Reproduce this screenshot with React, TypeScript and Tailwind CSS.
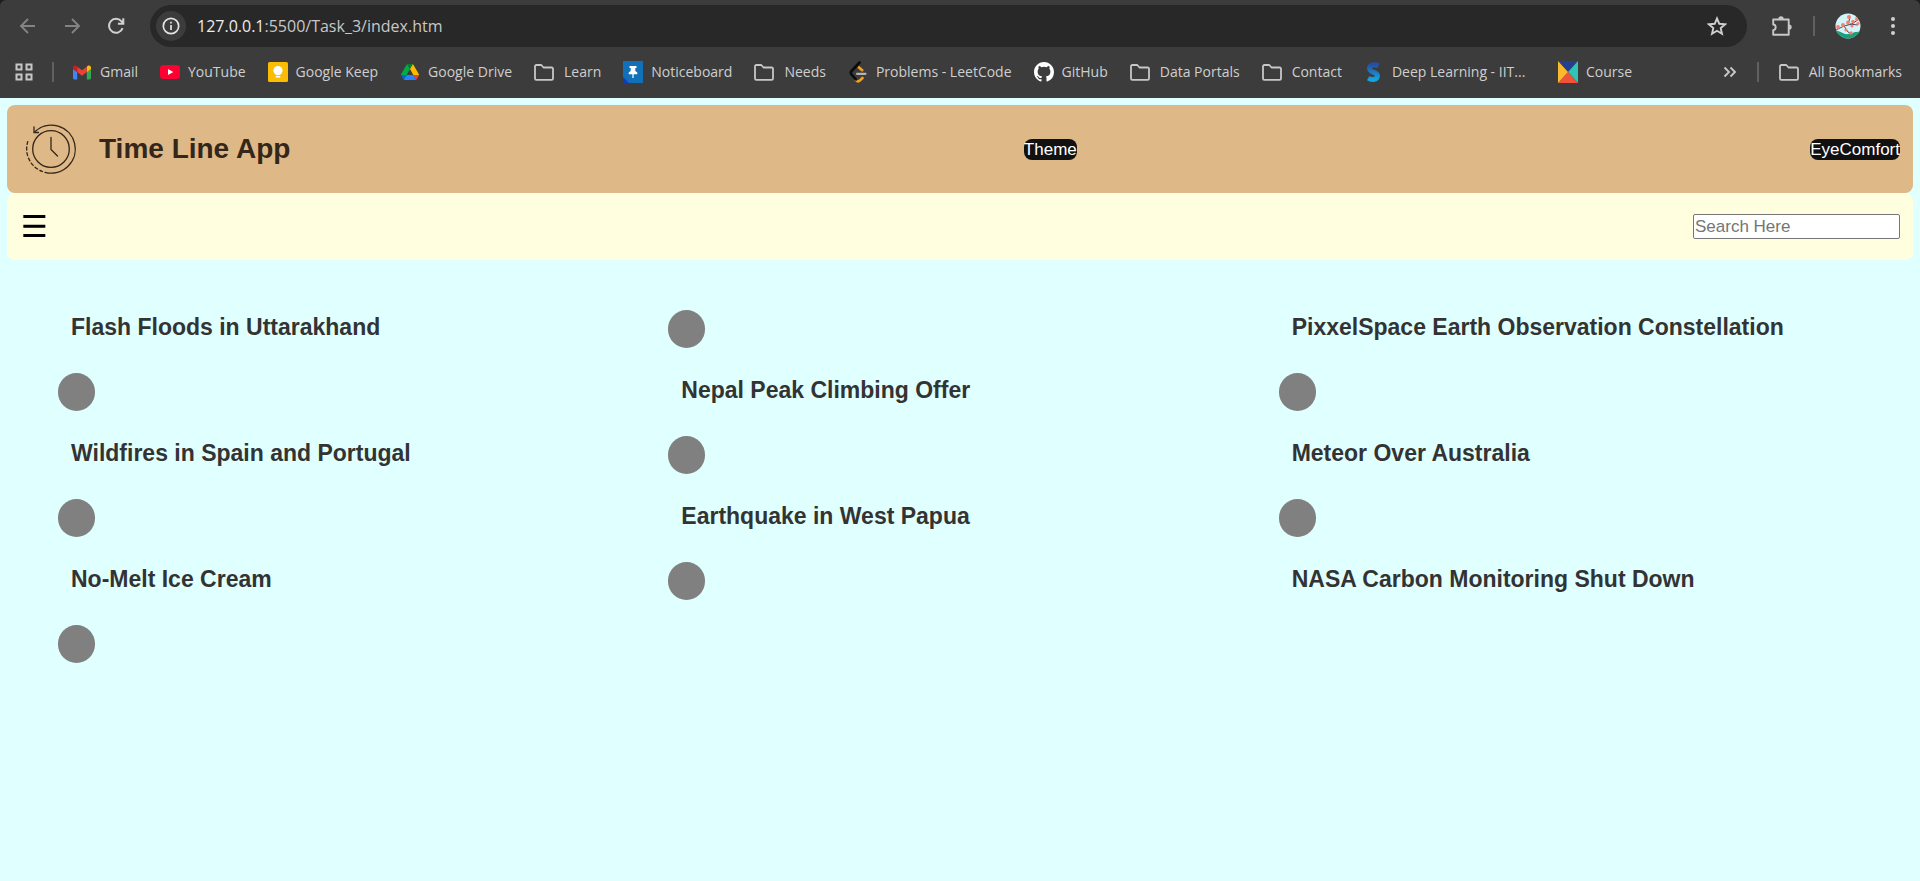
import type { ReactNode } from "react";

function FolderIcon() {
  return (
    <svg viewBox="0 0 20 20" className="size-5" fill="none" stroke="#c7c7c7" strokeWidth="1.8" strokeLinejoin="round">
      <path d="M1 16.500V4.300A1.300 1.300 0 0 1 2.300 3h5l2.200 2.500h8.200A1.300 1.300 0 0 1 19 6.800v9.700a1.300 1.300 0 0 1-1.300 1.300H2.300A1.300 1.300 0 0 1 1 16.500Z" />
    </svg>
  );
}

function GmailIcon() {
  return (
    <svg viewBox="0 0 20 20" className="size-5">
      <path fill="#4285f4" d="M1 7v9.200c0 .7.6 1.200 1.300 1.200h2.900V9.800z" />
      <path fill="#34a853" d="M14.800 17.400h2.900c.7 0 1.300-.6 1.300-1.200V7l-4.200 3.100z" />
      <path fill="#fbbc04" d="M14.800 4.800v5.400L19 7.100V5.400c0-1.700-1.900-2.600-3.200-1.600z" />
      <path fill="#ea4335" d="M5.200 10V4.700L10 8.300l4.800-3.600V10L10 13.700z" />
      <path fill="#c5221f" d="M1 5.400v1.800l4.200 3V4.700l-1-.9C2.900 2.800 1 3.700 1 5.400z" />
    </svg>
  );
}

function YouTubeIcon() {
  return (
    <svg viewBox="0 0 20 20" className="size-5">
      <rect x="0" y="3" width="20" height="14" rx="3.500" fill="#ff0033" />
      <path d="M8 7l5.300 3L8 13z" fill="#fff" />
    </svg>
  );
}

function KeepIcon() {
  return (
    <svg viewBox="0 0 20 20" className="size-5">
      <rect width="20" height="20" rx="1.500" fill="#fbbc04" />
      <circle cx="10" cy="8.600" r="4.600" fill="#fff" />
      <path d="M7.700 11h4.600v2H7.700zM7.700 14h4.600v1.500H7.700z" fill="#fff" />
    </svg>
  );
}

function DriveIcon() {
  return (
    <svg viewBox="0 0 87.300 78" className="size-[18px]">
      <path fill="#0066da" d="m6.600 66.850 3.850 6.650c.8 1.400 1.950 2.500 3.300 3.300l13.750-23.800H0c0 1.550.4 3.100 1.200 4.500z" />
      <path fill="#00ac47" d="M43.650 25 29.900 1.200c-1.350.8-2.500 1.900-3.300 3.300L1.200 48.500A9.060 9.060 0 0 0 0 53h27.500z" />
      <path fill="#ea4335" d="M73.550 76.800c1.350-.8 2.500-1.900 3.300-3.300l1.600-2.750L86.100 57.500c.8-1.400 1.200-2.950 1.200-4.500H59.800l5.850 11.500z" />
      <path fill="#00832d" d="M43.650 25 57.400 1.200C56.050.4 54.500 0 52.900 0H34.400c-1.600 0-3.150.45-4.500 1.200z" />
      <path fill="#2684fc" d="M59.800 53H27.500L13.750 76.800c1.350.8 2.900 1.200 4.500 1.200h50.800c1.600 0 3.150-.45 4.500-1.200z" />
      <path fill="#ffba00" d="M73.400 26.500 60.700 4.500c-.8-1.400-1.950-2.500-3.300-3.300L43.650 25 59.800 53h27.450c0-1.550-.4-3.100-1.200-4.500z" />
    </svg>
  );
}

function PinIcon() {
  return (
    <svg viewBox="0 0 20 22" className="h-[22px] w-5">
      <path fill="#1170b8" d="M0 0h20v22H0z" />
      <path fill="#1539c4" d="M0 16l6 6H0z" />
      <path fill="#fff" d="M6.500 5h7v2h-1.200v3l2 1.500v1.700h-3.700V17h-1.200v-3.800H5.700v-1.700l2-1.500V7H6.500z" />
    </svg>
  );
}

function LeetCodeIcon() {
  return (
    <svg viewBox="0 0 18 22" className="h-[22px] w-[18px]" fill="none" strokeLinecap="round" strokeWidth="2.600">
      <path stroke="#f9a01b" d="M10 6.500l3.200 2.700M13.500 17l-2.200 2.200c-1.300 1.300-3.200 1.200-4.400 0" />
      <path stroke="#0b0b0b" d="M10.500 1.500L2.600 10c-1 1.100-1 2.500 0 3.600L7 18.500" />
      <path stroke="#b3b3b3" strokeWidth="2.200" d="M8 12.800h8.500" />
    </svg>
  );
}

function GitHubIcon() {
  return (
    <svg viewBox="0 0 16 16" className="size-5" fill="#fff">
      <path d="M8 0C3.580 0 0 3.580 0 8c0 3.540 2.290 6.530 5.470 7.590.4.070.55-.17.55-.38 0-.19-.01-.82-.01-1.490-2.010.37-2.530-.49-2.690-.94-.09-.23-.48-.94-.82-1.130-.28-.15-.68-.52-.01-.53.63-.01 1.080.58 1.230.82.72 1.210 1.870.87 2.330.66.070-.52.28-.87.51-1.070-1.780-.2-3.640-.89-3.640-3.950 0-.87.31-1.590.82-2.150-.08-.2-.36-1.020.08-2.120 0 0 .67-.21 2.200.82a7.600 7.600 0 0 1 4 0c1.530-1.040 2.200-.82 2.200-.82.44 1.100.16 1.920.08 2.120.51.56.82 1.270.82 2.150 0 3.070-1.870 3.750-3.650 3.950.29.25.54.73.54 1.480 0 1.070-.01 1.930-.01 2.200 0 .21.15.46.55.38A8 8 0 0 0 16 8c0-4.420-3.580-8-8-8z" />
    </svg>
  );
}

function SwayamIcon() {
  return (
    <svg viewBox="0 0 18 22" className="h-[22px] w-[18px]" fill="none">
      <defs>
        <linearGradient id="wave" x1="0" y1="0" x2="0" y2="1">
          <stop offset="0" stopColor="#2450a4" />
          <stop offset="1" stopColor="#12a5e0" />
        </linearGradient>
      </defs>
      <path stroke="url(#wave)" strokeWidth="5" d="M13.500 4.700C9.500 2.800 4.500 3.700 4.500 7.300c0 4.400 7.900 3.200 7.900 7.400 0 3.800-5.200 4.800-9.200 2.500" />
    </svg>
  );
}

function CourseIcon() {
  return (
    <svg viewBox="0 0 20 22" className="h-[22px] w-5">
      <path fill="#23408e" d="M0 0h20L10 11z" />
      <path fill="#2ec4b6" d="M20 0v22L10 11z" />
      <path fill="#f0533a" d="M0 22h20L10 11z" />
      <path fill="#fdb92e" d="M0 0v22l10-11z" />
    </svg>
  );
}

function AvatarIcon() {
  return (
    <svg viewBox="0 0 26 26" className="size-[26px]">
      <defs>
        <clipPath id="avatar-round">
          <circle cx="13" cy="13" r="12.500" />
        </clipPath>
      </defs>
      <g clipPath="url(#avatar-round)">
        <path fill="#d5f3fb" d="M0 0h26v26H0z" />
        <path fill="#16a07c" d="M0 18c4-1 6 2 10 3 5 1 9-3 16-2v7H0z" />
        <path fill="none" stroke="#4d4a5e" strokeWidth="1" d="M1 17l8-4 8-2 7-5M9 13l4 6 4 2M13 12l2-8M15 11l8 1" />
        <g fill="#f0826f">
          <circle cx="14" cy="4" r="2" />
          <circle cx="22" cy="6" r="2" />
          <circle cx="18" cy="8.500" r="1.800" />
          <circle cx="23" cy="10.500" r="1.600" />
          <circle cx="13" cy="9.500" r="1.900" />
          <circle cx="8" cy="12" r="2" />
          <circle cx="3" cy="14" r="1.900" />
          <circle cx="17" cy="13" r="1.600" />
          <circle cx="11" cy="17" r="1.600" />
          <circle cx="16" cy="20" r="1.700" />
        </g>
      </g>
    </svg>
  );
}

type Bookmark = { label: string; icon?: ReactNode; labelClass?: string };

const bookmarks: Bookmark[] = [
  { label: "Gmail", icon: <GmailIcon /> },
  { label: "YouTube", icon: <YouTubeIcon /> },
  { label: "Google Keep", icon: <KeepIcon /> },
  { label: "Google Drive", icon: <DriveIcon /> },
  { label: "Learn" },
  { label: "Noticeboard", icon: <PinIcon /> },
  { label: "Needs" },
  { label: "Problems - LeetCode", icon: <LeetCodeIcon /> },
  { label: "GitHub", icon: <GitHubIcon /> },
  { label: "Data Portals" },
  { label: "Contact" },
  { label: "Deep Learning - IIT...", icon: <SwayamIcon />, labelClass: "w-36" },
  { label: "Course", icon: <CourseIcon /> },
];

const events = [
  "Flash Floods in Uttarakhand",
  "PixxelSpace Earth Observation Constellation",
  "Nepal Peak Climbing Offer",
  "Wildfires in Spain and Portugal",
  "Meteor Over Australia",
  "Earthquake in West Papua",
  "No-Melt Ice Cream",
  "NASA Carbon Monitoring Shut Down",
];

function Toolbar() {
  return (
    <div className="flex h-[52px] items-center pr-[17px] pl-[18px]">
      <div className="flex items-center gap-6">
        <button aria-label="Back" className="text-[#838383]">
          <svg viewBox="0 0 20 20" className="size-5" fill="none" stroke="currentColor" strokeWidth="1.900">
            <path d="M17 10H3.500M10 3l-7 7 7 7" />
          </svg>
        </button>
        <button aria-label="Forward" className="text-[#838383]">
          <svg viewBox="0 0 20 20" className="size-5" fill="none" stroke="currentColor" strokeWidth="1.900">
            <path d="M3 10h13.500M10 3l7 7-7 7" />
          </svg>
        </button>
        <button aria-label="Reload" className="text-[#d0d0d0]">
          <svg viewBox="0 0 20 20" className="size-5" fill="none" stroke="currentColor" strokeWidth="2">
            <path d="M16.600 12.200A7 7 0 1 1 15.300 5.200L17 7M17.300 2.300v5.400h-5.400" />
          </svg>
        </button>
      </div>
      <div className="ml-6 flex h-[42px] flex-1 items-center rounded-full bg-[#282828] pr-5 pl-1.5">
        <button aria-label="Site information" className="flex size-[30px] items-center justify-center rounded-full bg-[#3c3c3c]">
          <svg viewBox="0 0 18 18" className="size-[18px]" fill="none" stroke="#e3e3e3" strokeWidth="1.700">
            <circle cx="9" cy="9" r="7.700" />
            <path d="M9 8v5M9 4.700v1.900" />
          </svg>
        </button>
        <div className="ml-[11px] flex-1 text-[16px] text-[#c7c7c7]">
          <span className="text-[#ececec]">127.0.0.1</span>:5500/Task_3/index.htm
        </div>
        <button aria-label="Bookmark this page">
          <svg viewBox="0 0 20 20" className="size-5" fill="none" stroke="#d0d0d0" strokeWidth="1.900">
            <path d="M10 2.500l2.300 5.300 5.800.5-4.400 3.800 1.300 5.700-5-3-5 3 1.300-5.700-4.400-3.800 5.800-.5z" />
          </svg>
        </button>
      </div>
      <button aria-label="Extensions" className="ml-6">
        <svg viewBox="0 0 22 22" className="size-[22px]" fill="none" stroke="#c7c7c7" strokeWidth="1.900" strokeLinejoin="round">
          <path d="M2.200 4.500h15.500v15.300H2.200v-4.700c3.300-.3 3.300-5.300 0-5.600z" />
          <path fill="#c7c7c7" stroke="none" d="M7.300 4a2.700 2.700 0 0 1 5.400 0zM18 9.400a2.700 2.700 0 0 1 0 5.400z" />
        </svg>
      </button>
      <span className="ml-5 h-5 w-0.5 bg-[#606060]" />
      <button aria-label="Profile" className="ml-5">
        <AvatarIcon />
      </button>
      <button aria-label="Menu" className="ml-[22px]">
        <svg viewBox="0 0 20 20" className="size-5" fill="#d0d0d0">
          <circle cx="10" cy="3" r="2" />
          <circle cx="10" cy="10" r="2" />
          <circle cx="10" cy="17" r="2" />
        </svg>
      </button>
    </div>
  );
}

function BookmarkLink({ label, icon, labelClass }: Bookmark) {
  return (
    <a href="#" className={icon ? "flex items-center gap-2 whitespace-nowrap" : "flex items-center gap-2.5 whitespace-nowrap"}>
      <span className="flex size-5 items-center justify-center">{icon ?? <FolderIcon />}</span>
      <span className={labelClass}>{label}</span>
    </a>
  );
}

function BookmarkBar() {
  return (
    <nav className="flex h-[46px] items-start pt-[10px] pr-[18px] pl-[14px] text-[14px] leading-5 text-[#cfcfcf]">
      <button aria-label="Apps">
        <svg viewBox="0 0 20 20" className="size-5" fill="none" stroke="#c7c7c7" strokeWidth="2">
          <path d="M2.500 2.500h5v5h-5zM12.500 2.500h5v5h-5zM2.500 12.500h5v5h-5zM12.500 12.500h5v5h-5z" />
        </svg>
      </button>
      <span className="mx-[18px] h-5 w-0.5 bg-[#606060]" />
      <div className="flex flex-1 gap-[22px]">
        {bookmarks.map((bookmark) => (
          <BookmarkLink key={bookmark.label} {...bookmark} />
        ))}
      </div>
      <button aria-label="More bookmarks">
        <svg viewBox="0 0 14 20" className="h-5 w-3.5" fill="none" stroke="#c7c7c7" strokeWidth="1.900">
          <path d="M1.500 5.500L6 10l-4.500 4.500M7.500 5.500L12 10l-4.500 4.500" />
        </svg>
      </button>
      <span className="mx-5 h-5 w-0.5 bg-[#606060]" />
      <BookmarkLink label="All Bookmarks" />
    </nav>
  );
}

function ClockLogo() {
  return (
    <svg viewBox="0 0 56 56" className="size-14" fill="none" stroke="#33261a" strokeWidth="1.300" strokeLinecap="round">
      <circle cx="28" cy="28" r="18.300" />
      <path d="M12 10.500A24 24 0 1 1 22 51.300" />
      <path d="M19.500 50.500A24 24 0 0 1 5 20" strokeDasharray="3 2.600" />
      <path d="M11 6v5.500h4.500M28 16.500v12l6.500 6.500" />
    </svg>
  );
}

export default function App() {
  return (
    <div className="min-h-screen bg-[#e0ffff] font-['Liberation_Sans',Arial,sans-serif]">
      <div className="bg-[#1c1c1c]">
        <div className="rounded-t-md bg-[#3c3c3c] font-['Open_Sans','Noto_Sans',sans-serif]">
          <Toolbar />
          <BookmarkBar />
        </div>
      </div>
      <div className="px-[7px] pt-[7px]">
        <header className="flex h-[88px] items-center justify-between rounded-lg bg-[#deb887] px-[13px] text-[17px] leading-[21px]">
          <div className="flex items-center gap-5 pl-[3px]">
            <ClockLogo />
            <h1 className="text-[28px] leading-8 font-bold text-[#33261a]">Time Line App</h1>
          </div>
          <button className="rounded-lg bg-[#111] text-white">Theme</button>
          <button className="rounded-lg bg-[#111] text-white">EyeComfort</button>
        </header>
        <div className="flex h-[67px] items-center justify-between rounded-lg bg-[#ffffe0] pr-[13px] pl-[14px]">
          <button aria-label="Open menu" className="font-['DejaVu_Sans',sans-serif] text-[30px] leading-8 text-black">
            ☰
          </button>
          <input
            type="search"
            aria-label="Search"
            placeholder="Search Here"
            className="h-[25px] w-[207px] rounded-[2px] border border-[#767676] bg-white px-px text-[17px] placeholder:text-[#757575]"
          />
        </div>
      </div>
      <main className="grid grid-cols-3 gap-[25px] py-[50px] pr-14 pl-[58px]">
        {events.flatMap((title) => [
          <h2 key={title} className="h-[38px] pl-[13px] text-[23px] leading-[34px] font-bold whitespace-nowrap text-[#333]">
            {title}
          </h2>,
          <span key={`${title} marker`} className="h-[38px] w-[37px] rounded-full bg-[#808080]" />,
        ])}
      </main>
    </div>
  );
}
